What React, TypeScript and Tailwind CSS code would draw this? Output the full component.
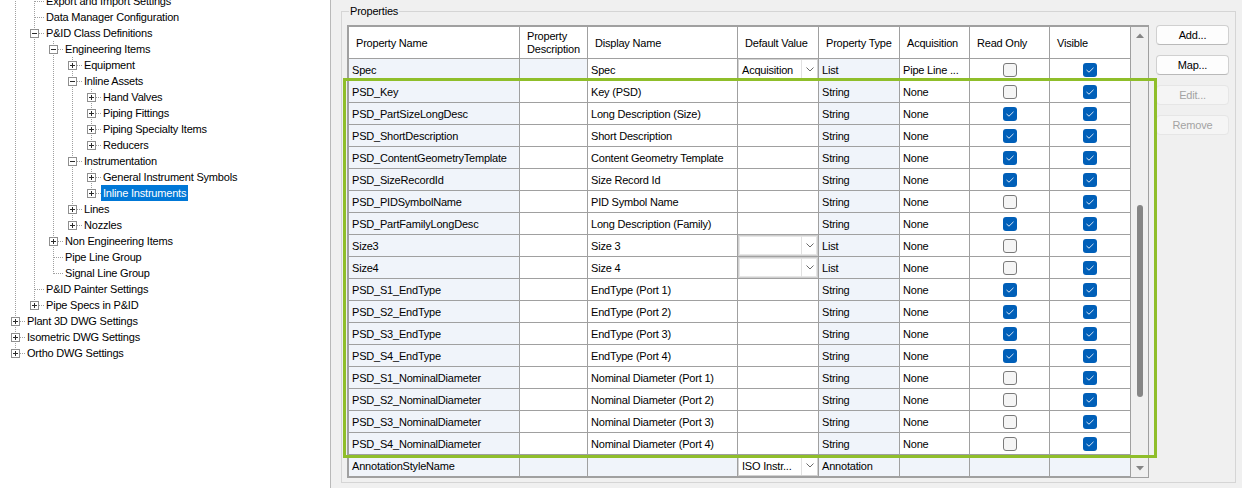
import React from "react";

type TreeItem = { label: string; level: number; box?: "+" | "-"; selected?: boolean };

const tree: TreeItem[] = [
  { label: "Export and Import Settings", level: 1 },
  { label: "Data Manager Configuration", level: 1 },
  { label: "P&ID Class Definitions", level: 1, box: "-" },
  { label: "Engineering Items", level: 2, box: "-" },
  { label: "Equipment", level: 3, box: "+" },
  { label: "Inline Assets", level: 3, box: "-" },
  { label: "Hand Valves", level: 4, box: "+" },
  { label: "Piping Fittings", level: 4, box: "+" },
  { label: "Piping Specialty Items", level: 4, box: "+" },
  { label: "Reducers", level: 4, box: "+" },
  { label: "Instrumentation", level: 3, box: "-" },
  { label: "General Instrument Symbols", level: 4, box: "+" },
  { label: "Inline Instruments", level: 4, box: "+", selected: true },
  { label: "Lines", level: 3, box: "+" },
  { label: "Nozzles", level: 3, box: "+" },
  { label: "Non Engineering Items", level: 2, box: "+" },
  { label: "Pipe Line Group", level: 2 },
  { label: "Signal Line Group", level: 2 },
  { label: "P&ID Painter Settings", level: 1 },
  { label: "Pipe Specs in P&ID", level: 1, box: "+" },
  { label: "Plant 3D DWG Settings", level: 0, box: "+" },
  { label: "Isometric DWG Settings", level: 0, box: "+" },
  { label: "Ortho DWG Settings", level: 0, box: "+" },
];

// for each column up to the row's level: does a sibling at that level follow?
function continues(i: number) {
  const item = tree[i];
  const out: boolean[] = [];
  for (let k = 0; k <= item.level; k++) {
    let c = false;
    for (let j = i + 1; j < tree.length; j++) {
      if (tree[j].level < k) break;
      if (tree[j].level === k) {
        c = true;
        break;
      }
    }
    out.push(c);
  }
  return out;
}

const DOT = "#a0a0a0";

function Guide({ node, down, box }: { node: boolean; down: boolean; box?: "+" | "-" }) {
  return (
    <svg width="19" height="16" className="shrink-0" shapeRendering="crispEdges">
      {!node && down && <line x1="9.5" y1="0" x2="9.5" y2="16" stroke={DOT} strokeDasharray="1 1" />}
      {node && (
        <>
          <line x1="9.5" y1="0" x2="9.5" y2={down ? 16 : 9} stroke={DOT} strokeDasharray="1 1" />
          <line x1="10" y1="8.5" x2="19" y2="8.5" stroke={DOT} strokeDasharray="1 1" />
          {box && (
            <g>
              <rect x="5.5" y="4.5" width="8" height="8" fill="#fff" stroke="#8f8f8f" />
              <line x1="7" y1="8.5" x2="12" y2="8.5" stroke="#2b2b2b" />
              {box === "+" && <line x1="9.5" y1="6" x2="9.5" y2="11" stroke="#2b2b2b" />}
            </g>
          )}
        </>
      )}
    </svg>
  );
}

function TreeRow({ index }: { index: number }) {
  const item = tree[index];
  const cont = continues(index);
  return (
    <div className="flex h-[16px] items-center pl-[6px]">
      {cont.map((c, k) => (
        <Guide key={k} node={k === item.level} down={c} box={k === item.level ? item.box : undefined} />
      ))}
      <span
        className={
          item.selected
            ? "h-[16px] whitespace-nowrap bg-[#0078d7] px-[2px] leading-[16px] text-white"
            : "h-[16px] whitespace-nowrap px-[2px] leading-[16px] text-black"
        }
      >
        {item.label}
      </span>
    </div>
  );
}

type PropRow = {
  name: string;
  display: string;
  combo?: string;
  type: string;
  acq: string;
  ro?: boolean;
  vis?: boolean;
  kind?: "spec" | "annot";
};

const rows: PropRow[] = [
  { name: "Spec", display: "Spec", combo: "Acquisition", type: "List", acq: "Pipe Line ...", ro: false, vis: true, kind: "spec" },
  { name: "PSD_Key", display: "Key (PSD)", type: "String", acq: "None", ro: false, vis: true },
  { name: "PSD_PartSizeLongDesc", display: "Long Description (Size)", type: "String", acq: "None", ro: true, vis: true },
  { name: "PSD_ShortDescription", display: "Short Description", type: "String", acq: "None", ro: true, vis: true },
  { name: "PSD_ContentGeometryTemplate", display: "Content Geometry Template", type: "String", acq: "None", ro: true, vis: true },
  { name: "PSD_SizeRecordId", display: "Size Record Id", type: "String", acq: "None", ro: true, vis: true },
  { name: "PSD_PIDSymbolName", display: "PID Symbol Name", type: "String", acq: "None", ro: false, vis: true },
  { name: "PSD_PartFamilyLongDesc", display: "Long Description (Family)", type: "String", acq: "None", ro: true, vis: true },
  { name: "Size3", display: "Size 3", combo: "", type: "List", acq: "None", ro: false, vis: true },
  { name: "Size4", display: "Size 4", combo: "", type: "List", acq: "None", ro: false, vis: true },
  { name: "PSD_S1_EndType", display: "EndType (Port 1)", type: "String", acq: "None", ro: true, vis: true },
  { name: "PSD_S2_EndType", display: "EndType (Port 2)", type: "String", acq: "None", ro: true, vis: true },
  { name: "PSD_S3_EndType", display: "EndType (Port 3)", type: "String", acq: "None", ro: true, vis: true },
  { name: "PSD_S4_EndType", display: "EndType (Port 4)", type: "String", acq: "None", ro: true, vis: true },
  { name: "PSD_S1_NominalDiameter", display: "Nominal Diameter (Port 1)", type: "String", acq: "None", ro: false, vis: true },
  { name: "PSD_S2_NominalDiameter", display: "Nominal Diameter (Port 2)", type: "String", acq: "None", ro: false, vis: true },
  { name: "PSD_S3_NominalDiameter", display: "Nominal Diameter (Port 3)", type: "String", acq: "None", ro: false, vis: true },
  { name: "PSD_S4_NominalDiameter", display: "Nominal Diameter (Port 4)", type: "String", acq: "None", ro: false, vis: true },
  { name: "AnnotationStyleName", display: "", combo: "ISO Instr...", type: "Annotation", acq: "", kind: "annot" },
];

const GRID = "grid grid-cols-[171px_68px_150px_81px_81px_70px_80px_81px]";
const BLUE = "bg-[#f0f4fa]";

function Cell({ children, blue, center }: { children?: React.ReactNode; blue?: boolean; center?: boolean }) {
  return (
    <div
      className={`flex h-[22px] items-center overflow-hidden whitespace-nowrap border-b border-r border-[#a0a0a0] ${
        center ? "justify-center" : "pl-[3px] pt-[1px]"
      } ${blue ? BLUE : "bg-white"}`}
    >
      {children}
    </div>
  );
}

function Combo({ text }: { text: string }) {
  const empty = text === "";
  return (
    <div className="h-[22px] border-b border-r border-[#a0a0a0] bg-white">
      <div
        className={`flex h-full w-full border bg-white ${
          empty ? "border-[#cfcfcf] shadow-[inset_0_0_0_1px_#e6e6e6]" : "border-[#d2d2d2]"
        }`}
      >
        <span className="flex flex-1 items-center overflow-hidden whitespace-nowrap pl-[3px] pt-[1px]">{text}</span>
        <span className="flex w-[16px] items-center justify-center border-l border-[#e1e1e1]">
          <svg width="8" height="5" viewBox="0 0 8 5">
            <polyline points="0.5,0.5 4,4 7.5,0.5" fill="none" stroke="#6a6a6a" strokeWidth="1" />
          </svg>
        </span>
      </div>
    </div>
  );
}

function Check({ on }: { on: boolean }) {
  if (on)
    return (
      <span className="flex h-[14px] w-[14px] items-center justify-center rounded-[3px] bg-[#005fb8]">
        <svg width="10" height="8" viewBox="0 0 10 8">
          <polyline points="1.5,4 4,6.2 8.5,1.8" fill="none" stroke="#dbe8f6" strokeWidth="1" />
        </svg>
      </span>
    );
  return <span className="h-[14px] w-[14px] rounded-[3px] border border-[#7a7a7a] bg-[#f5f5f5]" />;
}

function Header() {
  const h = "flex h-[32px] items-center border-b border-r border-[#a0a0a0] bg-white pl-[7px] pt-[1px]";
  return (
    <div className={GRID}>
      <div className={`${h} pl-2`}>Property Name</div>
      <div className={`${h} leading-[13px]`}>
        Property
        <br />
        Description
      </div>
      <div className={h}>Display Name</div>
      <div className={h}>Default Value</div>
      <div className={h}>Property Type</div>
      <div className={h}>Acquisition</div>
      <div className={h}>Read Only</div>
      <div className={h}>Visible</div>
    </div>
  );
}

function DataRow({ r }: { r: PropRow }) {
  const annot = r.kind === "annot";
  return (
    <div className={GRID}>
      <Cell blue>{r.name}</Cell>
      <Cell blue={r.kind === "spec" || annot} />
      <Cell blue={annot}>{r.display}</Cell>
      {r.combo !== undefined ? <Combo text={r.combo} /> : <Cell />}
      <Cell blue>{r.type}</Cell>
      <Cell blue={annot}>{r.acq}</Cell>
      <Cell blue={annot} center>
        {r.ro !== undefined && <Check on={r.ro} />}
      </Cell>
      <Cell blue={annot} center>
        {r.vis !== undefined && <Check on={r.vis} />}
      </Cell>
    </div>
  );
}

function Scrollbar() {
  return (
    <div className="flex w-[17px] flex-col bg-[#f0f0f0]">
      <div className="flex h-[17px] items-center justify-center">
        <svg width="8" height="5" viewBox="0 0 8 5">
          <polygon points="0,5 4,0.5 8,5" fill="#858585" />
        </svg>
      </div>
      <div className="ml-[6px] mt-[161px] h-[192px] w-[6px] rounded-full bg-[#858585]" />
      <div className="flex-1" />
      <div className="flex h-[17px] items-center justify-center">
        <svg width="8" height="5" viewBox="0 0 8 5">
          <polygon points="0,0 8,0 4,4.5" fill="#858585" />
        </svg>
      </div>
    </div>
  );
}

function Btn({ label, disabled }: { label: string; disabled?: boolean }) {
  return (
    <button
      className={
        disabled
          ? "flex h-[20px] w-[73px] items-center justify-center rounded-[4px] border border-[#e6e6e6] bg-[#f5f5f5] text-[#a3a3a3]"
          : "flex h-[20px] w-[73px] items-center justify-center rounded-[4px] border border-[#d0d0d0] border-b-[#b9b9b9] bg-[#fdfdfd] text-black"
      }
    >
      {label}
    </button>
  );
}

export default function App() {
  return (
    <div className="relative flex h-[488px] w-[1242px] overflow-hidden bg-[#f0f0f0] font-['Liberation_Sans',Arial,sans-serif] text-[11px] tracking-[-0.2px] text-black">
      {/* tree */}
      <div className="h-full w-[331px] shrink-0 overflow-hidden border-r border-[#b9b9b9] bg-white">
        <div className="-mt-[7px] flex flex-col">
          {tree.map((_, i) => (
            <TreeRow key={i} index={i} />
          ))}
        </div>
      </div>

      {/* properties panel */}
      <div className="pl-[10px] pt-[11px]">
        <div className="relative flex border border-[#d5d5d5] pb-[4px] pl-[5px] pr-[6px] pt-[13px]">
          <span className="absolute -top-[7px] left-[7px] bg-[#f0f0f0] px-[1px] leading-[13px]">Properties</span>
          <div className="flex border-b border-l-2 border-r border-t-2 border-[#a0a0a0]">
            <div className="w-[782px]">
              <Header />
              {rows.map((r) => (
                <DataRow key={r.name} r={r} />
              ))}
            </div>
            <Scrollbar />
          </div>
          <div className="ml-[7px] flex flex-col gap-[10px]">
            <Btn label="Add..." />
            <Btn label="Map..." />
            <Btn label="Edit..." disabled />
            <Btn label="Remove" disabled />
          </div>
        </div>
      </div>

      {/* highlight frame */}
      <div className="pointer-events-none absolute left-[343px] top-[78px] h-[380px] w-[814px] border-[3px] border-[#8fbe2a]" />
    </div>
  );
}
